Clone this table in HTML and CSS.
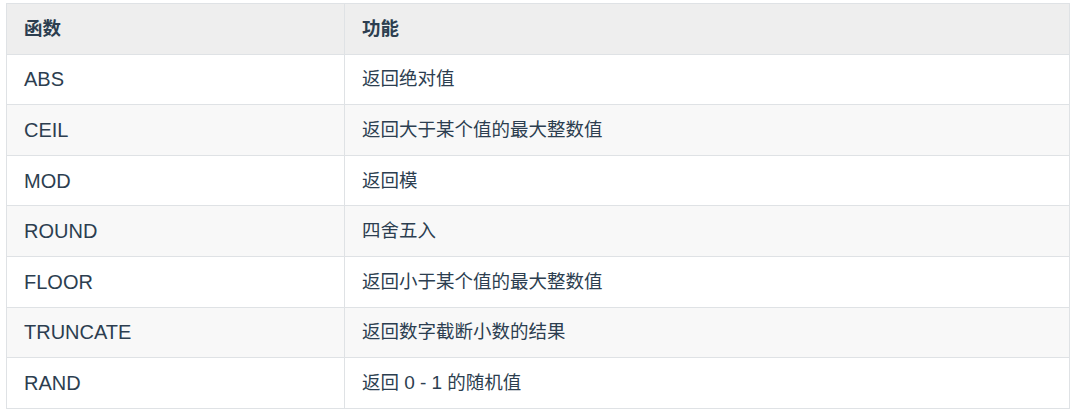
FILE: index.html
```html
<!DOCTYPE html>
<html lang="zh-CN">
<head>
<meta charset="utf-8">
<link rel="stylesheet" href="styles.css">
</head>
<body>
<div class="wrap">
<table class="fn-table">
  <thead>
    <tr><th class="col-name">函数</th><th class="col-desc">功能</th></tr>
  </thead>
  <tbody>
    <tr><td class="name">ABS</td><td class="desc">返回绝对值</td></tr>
    <tr><td class="name">CEIL</td><td class="desc">返回大于某个值的最大整数值</td></tr>
    <tr><td class="name">MOD</td><td class="desc">返回模</td></tr>
    <tr><td class="name">ROUND</td><td class="desc">四舍五入</td></tr>
    <tr><td class="name">FLOOR</td><td class="desc">返回小于某个值的最大整数值</td></tr>
    <tr><td class="name">TRUNCATE</td><td class="desc">返回数字截断小数的结果</td></tr>
    <tr><td class="name">RAND</td><td class="desc">返回 <span class="num">0 - 1</span> 的随机值</td></tr>
  </tbody>
</table>
</div>
</body>
</html>
```

FILE: styles.css
```css
html, body {
  margin: 0;
  padding: 0;
  background: #ffffff;
}
.wrap {
  padding: 3px 10px 0 6px;
}
.fn-table {
  border-collapse: collapse;
  width: 1064px;
  font-family: "Liberation Sans", "Noto Sans CJK SC", sans-serif;
  font-size: 18.5px;
  color: #2c3e50;
}
.fn-table th,
.fn-table td {
  border: 1px solid #dfe2e5;
  height: 50.6px;
  padding: 0 17px;
  text-align: left;
  vertical-align: middle;
  box-sizing: border-box;
  line-height: 24px;
}
.fn-table th {
  background: #eeeeee;
  font-weight: bold;
}
.fn-table .col-name {
  width: 338px;
}
.fn-table .name {
  font-size: 20px;
}
.fn-table .num {
  font-size: 19px;
}
.fn-table tbody tr:nth-child(2n) {
  background: #f8f8f8;
}
```
